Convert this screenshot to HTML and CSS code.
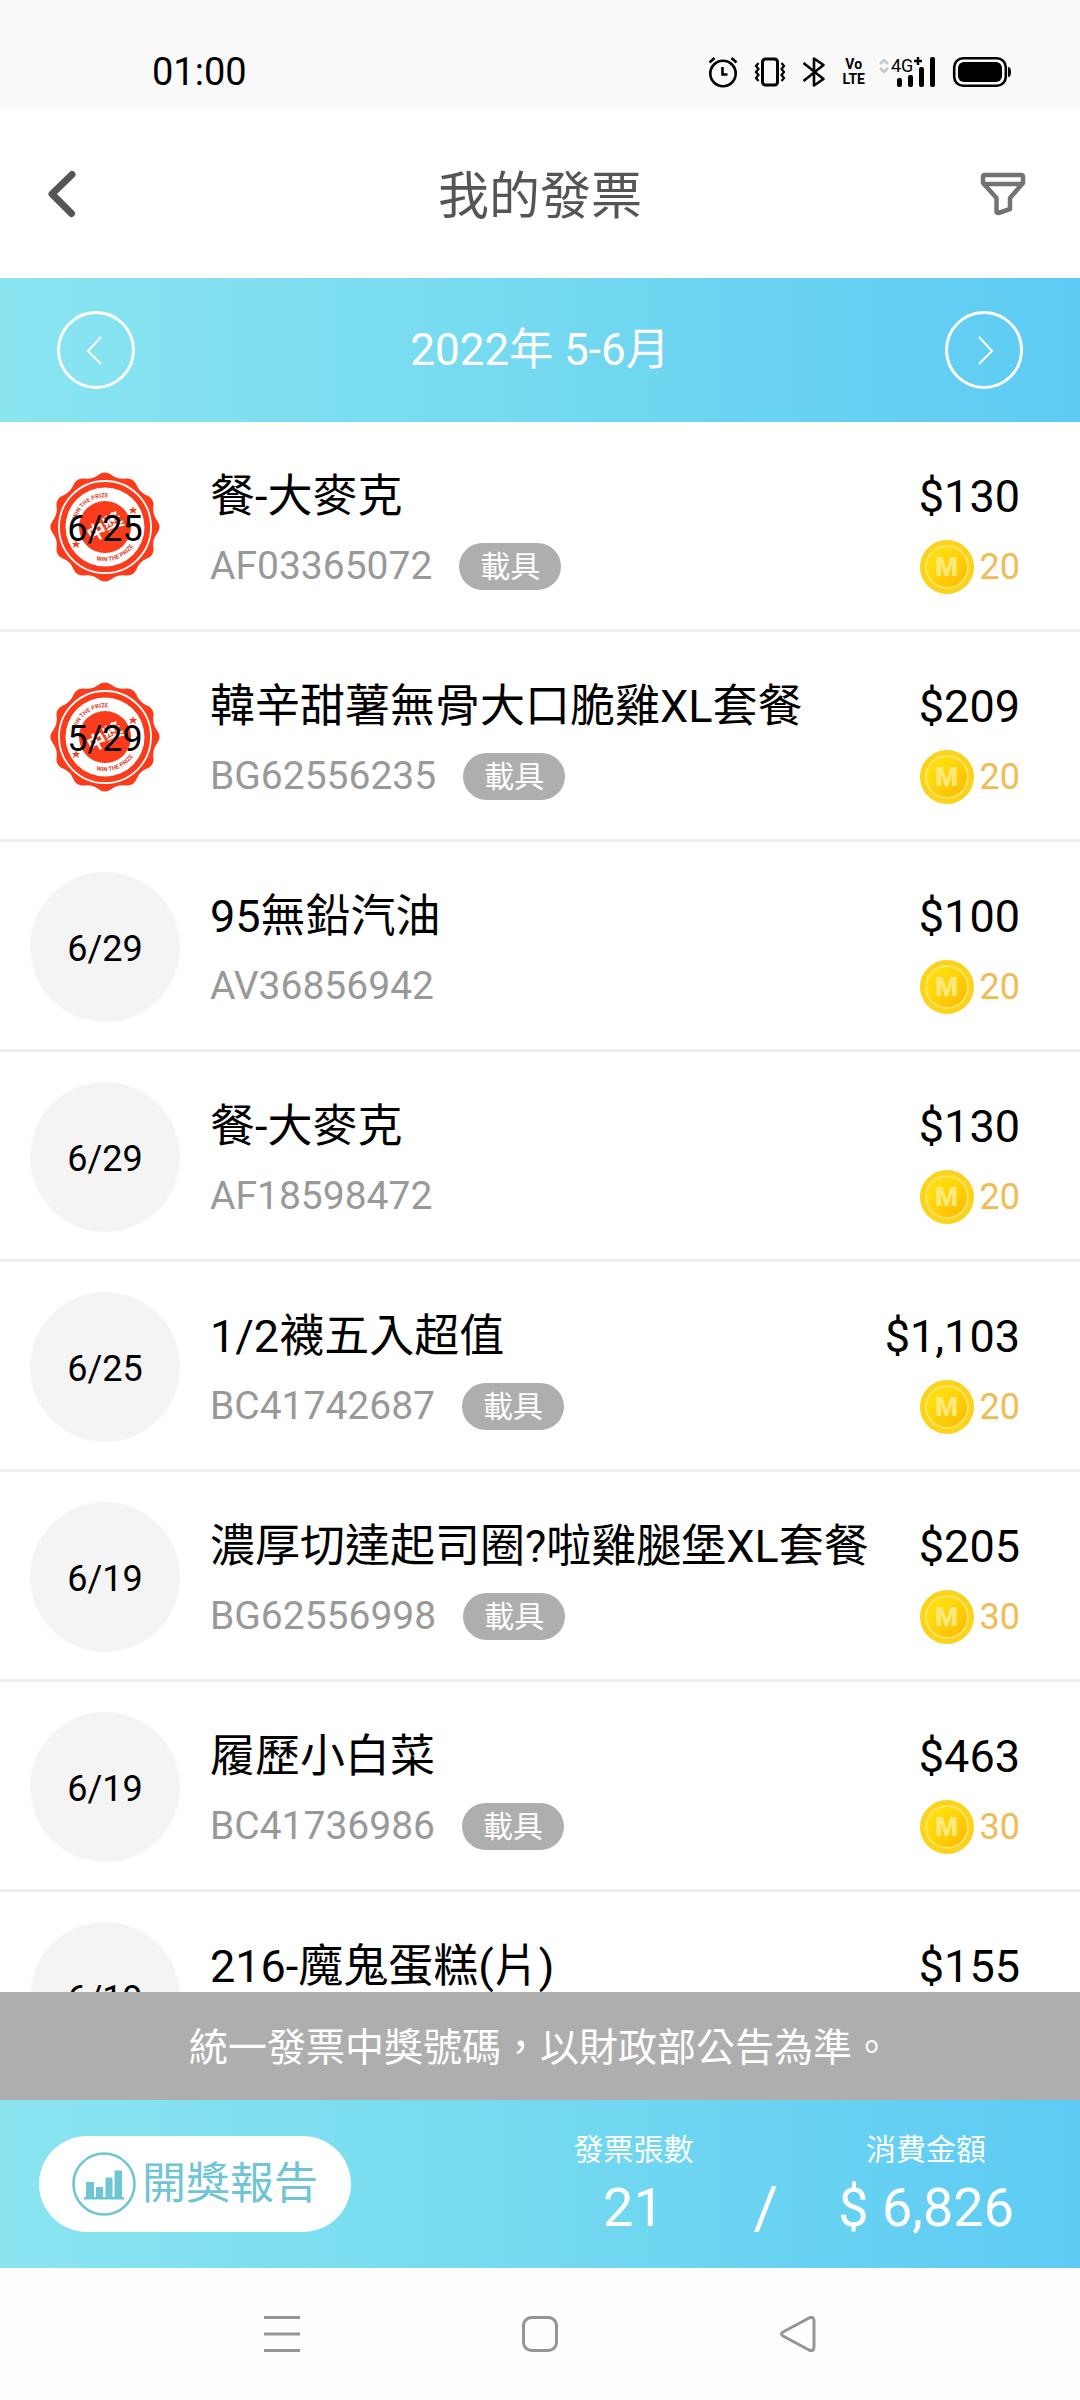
FILE: index.html
```html
<!DOCTYPE html>
<html lang="zh-TW">
<head>
    <meta charset="UTF-8">
    <meta name="viewport" content="width=device-width, initial-scale=1.0">
    <title>我的發票</title>
    <link rel="stylesheet" href="styles.css">
</head>
<body>
    <div class="app">
        <div class="status-bar">
            <span class="clock">01:00</span>
            <div class="status-icons">
                <svg width="30" height="32" viewBox="0 0 30 32" fill="none" stroke="#000" stroke-width="2.6">
                    <circle cx="15" cy="17.5" r="12.7"/>
                    <path d="M14.5 11v7.5h5"/>
                    <path d="M1.5 6.5l5-4.5M28.5 6.500l-5-4.5"/>
                </svg>
                <svg width="32" height="32" viewBox="0 0 32 32" fill="none" stroke="#000">
                    <rect x="8.5" y="3" width="15" height="26" rx="3" stroke-width="3"/>
                    <path stroke-width="2.2" d="M4.5 7l-2.5 3 2.5 3-2.5 3 2.5 3-2.5 3 2.5 3M27.5 7l2.500 3-2.5 3 2.500 3-2.5 3 2.500 3-2.5 3"/>
                </svg>
                <svg width="24" height="32" viewBox="0 0 24 32" fill="none" stroke="#000" stroke-width="2.6" stroke-linejoin="round">
                    <path d="M1.5 7L21.5 23 12 29.5V2.5L21.5 9 1.5 25"/>
                </svg>
                <span class="volte"><span>Vo</span><span>LTE</span></span>
                <svg class="signal" width="58" height="32" viewBox="0 0 58 32">
                    <path d="M2 8l4-4 4 4M2 12l4 4 4-4" fill="none" stroke="#c8c8c8" stroke-width="2.6"/>
                    <text x="13" y="16" class="network">4G</text>
                    <path d="M36 5h8M40 1v8" stroke="#000" stroke-width="2.4"/>
                    <g fill="#000">
                        <rect x="19" y="22" width="5" height="9" rx="2"/>
                        <rect x="30" y="19" width="5" height="12" rx="2"/>
                        <rect x="41" y="11" width="5" height="20" rx="2"/>
                        <rect x="52" y="1" width="5" height="30" rx="2"/>
                    </g>
                </svg>
                <svg width="60" height="32" viewBox="0 0 60 32">
                    <rect x="2.2" y="2.2" width="51.6" height="27.6" rx="9" fill="none" stroke="#000" stroke-width="2.6"/>
                    <rect x="6" y="6" width="44" height="20" rx="6"/>
                    <path d="M56 11q3 0 3 5t-3 5z"/>
                </svg>
            </div>
        </div>

        <header class="header">
            <button class="icon-btn" aria-label="返回">
                <svg width="28" height="48" viewBox="0 0 28 48" fill="none" stroke="#555" stroke-width="7" stroke-linecap="round" stroke-linejoin="round">
                    <path d="M24 4.5L4 24l19.5 19.5"/>
                </svg>
            </button>
            <h1>我的發票</h1>
            <button class="icon-btn" aria-label="篩選">
                <svg width="46" height="44" viewBox="0 0 46 44" fill="none" stroke="#737373" stroke-width="4.5" stroke-linejoin="round">
                    <path d="M5 3H41Q43 3 43 5V11L30 26V37L18.5 41Q16.5 41 16.5 39V26L3 11V5Q3 3 5 3ZM3 12H43"/>
                </svg>
            </button>
        </header>

        <nav class="month-bar" aria-label="月份">
            <button class="round-btn prev" aria-label="上一期">
                <svg width="16" height="30" viewBox="0 0 16 30"><path d="M15 2L2 16l13 13"/></svg>
            </button>
            <span>2022年 5-6月</span>
            <button class="round-btn next" aria-label="下一期">
                <svg width="16" height="30" viewBox="0 0 16 30"><path d="M1 2L14 16 1 29"/></svg>
            </button>
        </nav>

        <ul class="invoices">
            <li class="invoice">
                <div class="date won">
                    <svg viewBox="-55 -55 110 110">
                        <path id="seal-edge" fill="#fb3c1c" d="M52.2 -6.3Q57 0 52.2 6.3Q47.3 12.7 48.4 20.6Q49.4 28.5 42 31.6Q34.6 34.6 31.6 42Q28.5 49.4 20.6 48.4Q12.7 47.3 6.3 52.2Q0 57 -6.3 52.2Q-12.7 47.3 -20.6 48.4Q-28.5 49.4 -31.6 42Q-34.6 34.6 -42 31.6Q-49.4 28.5 -48.4 20.6Q-47.3 12.7 -52.2 6.3Q-57 0 -52.2 -6.3Q-47.3 -12.7 -48.4 -20.6Q-49.4 -28.5 -42 -31.6Q-34.6 -34.6 -31.6 -42Q-28.5 -49.4 -20.6 -48.4Q-12.7 -47.3 -6.3 -52.2Q0 -57 6.3 -52.2Q12.7 -47.3 20.6 -48.4Q28.5 -49.4 31.6 -42Q34.6 -34.6 42 -31.6Q49.4 -28.5 48.4 -20.6Q47.3 -12.7 52.2 -6.3Z"/>
                        <circle r="46" fill="none" stroke="#fff" stroke-width="1.8"/>
                        <circle r="39.5" fill="#fff"/>
                        <circle r="26" fill="#fb3c1c"/>
                        <path id="arc-top" fill="none" d="M-28.5 8.2A29.6 29.6 0 0 1 28.5 -8.2"/>
                        <path id="arc-bottom" fill="none" d="M-22 26.3A34.3 34.3 0 0 0 33.1 8.9"/>
                        <text class="seal-ring"><textPath href="#arc-top" startOffset="16">WIN THE PRIZE</textPath></text>
                        <text class="seal-ring"><textPath href="#arc-bottom" startOffset="15">WIN THE PRIZE</textPath></text>
                        <path id="stars" fill="#fb3c1c" d="M28 -21l1 3 3 0 -2 2 1 3 -3 -2 -3 2 1 -3 -2 -2 3 0zM-29 13l1 3 3 0 -2 2 1 3 -3 -2 -3 2 1 -3 -2 -2 3 0z"/>
                        <text class="seal-word" text-anchor="middle" y="7" transform="rotate(-30)">中獎</text>
                    </svg>
                    <span>6/25</span>
                </div>
                <div class="info">
                    <div class="name">餐-大麥克</div>
                    <div class="number">AF03365072 <span class="tag">載具</span></div>
                </div>
                <div class="amount">
                    <div class="price">$130</div>
                    <div class="points"><span class="coin">M</span>20</div>
                </div>
            </li>
            <li class="invoice">
                <div class="date won">
                    <svg viewBox="-55 -55 110 110">
                        <use href="#seal-edge"/>
                        <circle r="46" fill="none" stroke="#fff" stroke-width="1.8"/>
                        <circle r="39.5" fill="#fff"/>
                        <circle r="26" fill="#fb3c1c"/>
                        <text class="seal-ring"><textPath href="#arc-top" startOffset="16">WIN THE PRIZE</textPath></text>
                        <text class="seal-ring"><textPath href="#arc-bottom" startOffset="15">WIN THE PRIZE</textPath></text>
                        <use href="#stars"/>
                        <text class="seal-word" text-anchor="middle" y="7" transform="rotate(-30)">中獎</text>
                    </svg>
                    <span>5/29</span>
                </div>
                <div class="info">
                    <div class="name">韓辛甜薯無骨大口脆雞XL套餐</div>
                    <div class="number">BG62556235 <span class="tag">載具</span></div>
                </div>
                <div class="amount">
                    <div class="price">$209</div>
                    <div class="points"><span class="coin">M</span>20</div>
                </div>
            </li>
            <li class="invoice">
                <div class="date"><span>6/29</span></div>
                <div class="info">
                    <div class="name">95無鉛汽油</div>
                    <div class="number">AV36856942</div>
                </div>
                <div class="amount">
                    <div class="price">$100</div>
                    <div class="points"><span class="coin">M</span>20</div>
                </div>
            </li>
            <li class="invoice">
                <div class="date"><span>6/29</span></div>
                <div class="info">
                    <div class="name">餐-大麥克</div>
                    <div class="number">AF18598472</div>
                </div>
                <div class="amount">
                    <div class="price">$130</div>
                    <div class="points"><span class="coin">M</span>20</div>
                </div>
            </li>
            <li class="invoice">
                <div class="date"><span>6/25</span></div>
                <div class="info">
                    <div class="name">1/2襪五入超值</div>
                    <div class="number">BC41742687 <span class="tag">載具</span></div>
                </div>
                <div class="amount">
                    <div class="price">$1,103</div>
                    <div class="points"><span class="coin">M</span>20</div>
                </div>
            </li>
            <li class="invoice">
                <div class="date"><span>6/19</span></div>
                <div class="info">
                    <div class="name">濃厚切達起司圈?啦雞腿堡XL套餐</div>
                    <div class="number">BG62556998 <span class="tag">載具</span></div>
                </div>
                <div class="amount">
                    <div class="price">$205</div>
                    <div class="points"><span class="coin">M</span>30</div>
                </div>
            </li>
            <li class="invoice">
                <div class="date"><span>6/19</span></div>
                <div class="info">
                    <div class="name">履歷小白菜</div>
                    <div class="number">BC41736986 <span class="tag">載具</span></div>
                </div>
                <div class="amount">
                    <div class="price">$463</div>
                    <div class="points"><span class="coin">M</span>30</div>
                </div>
            </li>
            <li class="invoice">
                <div class="date"><span>6/19</span></div>
                <div class="info">
                    <div class="name">216-魔鬼蛋糕(片)</div>
                </div>
                <div class="amount">
                    <div class="price">$155</div>
                </div>
            </li>
        </ul>

        <p class="notice">統一發票中獎號碼，以財政部公告為準。</p>

        <footer class="summary">
            <button class="report-btn">
                <svg width="64" height="64" viewBox="0 0 64 64" fill="#6fc5d3">
                    <circle cx="32" cy="32" r="30.5" fill="none" stroke="#6fc5d3" stroke-width="2.6"/>
                    <path d="M12 45h40v2.5H12zM14 30h8v15h-8zM24 35h7v10h-7zM33.500 25.5h7V45h-7zM42.5 18.5h7.500V45h-7.500z"/>
                </svg>
                開獎報告
            </button>
            <div class="stats">
                <div class="stat">
                    <span class="label">發票張數</span>
                    <span class="value">21</span>
                </div>
                <span class="slash">/</span>
                <div class="stat">
                    <span class="label">消費金額</span>
                    <span class="value">$ 6,826</span>
                </div>
            </div>
        </footer>

        <div class="system-nav">
            <button aria-label="多工"><svg width="36" height="36" viewBox="0 0 36 36"><path d="M0 1.5H36M0 18H36M0 34.5H36"/></svg></button>
            <button aria-label="主畫面"><svg width="36" height="36" viewBox="0 0 36 36"><rect x="1.5" y="1.5" width="33" height="33" rx="8"/></svg></button>
            <button aria-label="返回"><svg width="36" height="36" viewBox="0 0 36 36"><path d="M3 16L29 2Q34 0 34 5V31Q34 36 29 34L3 20Q0 18 3 16Z"/></svg></button>
        </div>
    </div>
</body>
</html>
```
FILE: styles.css
```css
* {
    box-sizing: border-box;
}
body {
    margin: 0;
    font-family: Roboto, "Noto Sans CJK TC", sans-serif;
    color: #000;
    background: #fff;
}
button {
    display: flex;
    align-items: center;
    justify-content: center;
    padding: 0;
    border: none;
    background: none;
    font-family: inherit;
    cursor: pointer;
}
svg {
    display: block;
    flex: none;
}
.app {
    display: flex;
    flex-direction: column;
    height: 100vh;
}

/* Status bar */
.status-bar {
    display: flex;
    align-items: center;
    justify-content: space-between;
    padding: 34px 68px 0 152px;
    height: 110px;
    flex: none;
    background: #fafafa;
}
.clock {
    font-size: 38px;
}
.status-icons {
    display: flex;
    align-items: center;
    gap: 16px;
}
.volte {
    display: flex;
    flex-direction: column;
    align-items: center;
    font: bold 14px/15px Roboto, sans-serif;
}
.signal {
    margin-left: -3px;
}
.network {
    font: 18px Roboto, sans-serif;
}

/* Header */
.header {
    display: flex;
    align-items: center;
    justify-content: space-between;
    height: 168px;
    flex: none;
    padding: 0 39px;
}
.header h1 {
    margin: 0;
    padding-top: 6px;
    font-size: 51px;
    line-height: 60px;
    font-weight: 400;
    color: #555;
}
.icon-btn {
    width: 75px;
    height: 60px;
}
.icon-btn:first-child {
    justify-content: flex-start;
    padding-left: 9px;
}
.icon-btn:last-child {
    justify-content: flex-end;
    padding-right: 15px;
}

.month-bar,
.summary {
    display: flex;
    align-items: center;
    justify-content: space-between;
    flex: none;
    color: #fff;
    background: linear-gradient(90deg, #8ae5f1, #74d9f0 50%, #5dcbf4);
}
.month-bar {
    height: 144px;
    padding: 0 57px;
    font-size: 44px;
    line-height: 60px;
}
.round-btn {
    width: 78px;
    height: 78px;
    border: 3px solid #fff;
    border-radius: 50%;
}
.round-btn.prev {
    padding-right: 4px;
}
.round-btn.next {
    padding-left: 4px;
}
.round-btn path {
    fill: none;
    stroke: #fff;
    stroke-width: 2;
}

/* Invoice list */
.invoices {
    flex: 1;
    min-height: 0;
    overflow: hidden;
    margin: 0;
    padding: 0;
    list-style: none;
}
.invoice {
    display: flex;
    gap: 30px;
    padding: 30px 60px 27px 30px;
    border-bottom: 3px solid #eee;
}
.date {
    display: grid;
    place-items: center;
    flex: none;
    width: 150px;
    height: 150px;
    border-radius: 50%;
    background: #f4f4f4;
    font-size: 36px;
}
.date.won {
    background: none;
}
.date > * {
    grid-area: 1 / 1;
}
.date svg {
    width: 110px;
    height: 110px;
}
.date span {
    z-index: 1;
    padding-top: 3px;
}
.info {
    flex: 1;
    min-width: 0;
}
.info,
.amount {
    display: flex;
    flex-direction: column;
    gap: 9px;
    padding-top: 15px;
}
.name,
.price {
    font-size: 45px;
    line-height: 60px;
    white-space: nowrap;
}
.number {
    display: flex;
    align-items: center;
    gap: 27px;
    height: 60px;
    font-size: 39px;
    color: #999;
}
.tag {
    padding: 0 21px;
    border-radius: 24px;
    background: #aeaeae;
    color: #fff;
    font-size: 30px;
    line-height: 47px;
}
.amount {
    align-items: flex-end;
}
.points {
    display: flex;
    align-items: center;
    gap: 6px;
    height: 62px;
    font-size: 36px;
    line-height: 60px;
    color: #f1bc55;
}
.coin {
    display: grid;
    place-items: center;
    width: 54px;
    height: 54px;
    border: 5px solid #fbd21c;
    border-radius: 50%;
    background: linear-gradient(135deg, #ffdc0c 30%, #fbb604) padding-box;
    box-shadow: inset 0 0 0 2px #ffe45c;
    color: #ffe97c;
    font-size: 26px;
    font-weight: 900;
    line-height: 42px;
}
.seal-ring {
    font: bold 6px Roboto, sans-serif;
    fill: #d9452f;
}
.seal-word {
    font: bold 19px "Noto Sans CJK TC", sans-serif;
    fill: #fff;
}

/* Bottom bars */
.notice {
    flex: none;
    margin: 0;
    padding: 26px 24px 22px;
    background: #aeaeae;
    color: #fff;
    font-size: 39px;
    line-height: 60px;
    text-align: center;
}
.summary {
    height: 168px;
    padding: 0 66px 0 39px;
}
.report-btn {
    gap: 6px;
    height: 96px;
    padding: 0 33px;
    border-radius: 48px;
    background: #fff;
    color: #6fc5d3;
    font-size: 44px;
    line-height: 60px;
}
.stats {
    display: flex;
    align-items: flex-end;
    gap: 60px;
}
.stat {
    display: flex;
    flex-direction: column;
    align-items: center;
}
.label {
    font-size: 30px;
    line-height: 48px;
}
.value,
.slash {
    font-size: 54px;
    line-height: 68px;
}
.slash {
    font-size: 60px;
}

/* System navigation */
.system-nav {
    display: flex;
    align-items: center;
    justify-content: center;
    gap: 222px;
    height: 132px;
    flex: none;
    background: #fefefe;
}
.system-nav svg {
    fill: none;
    stroke: #959595;
    stroke-width: 3;
}
```
